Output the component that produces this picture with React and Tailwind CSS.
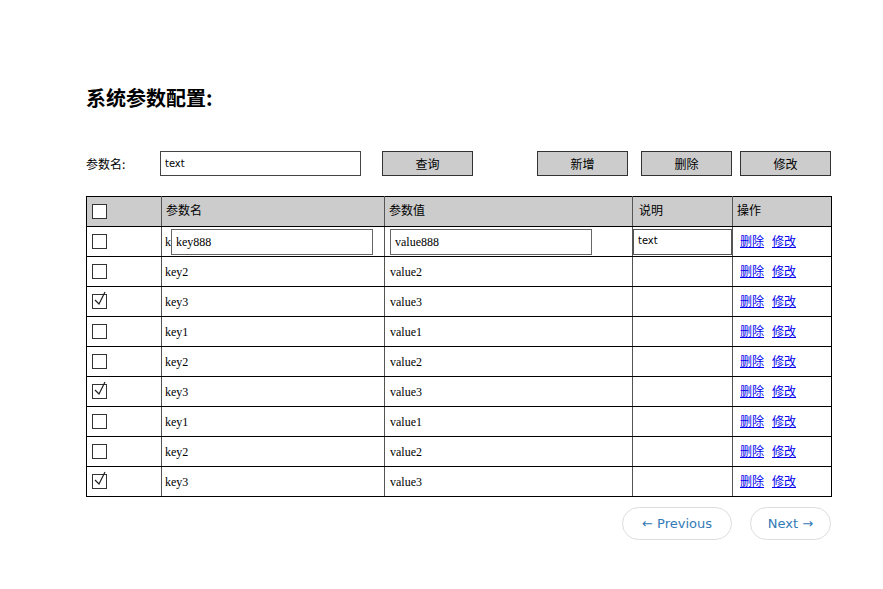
import React from "react";

const ROWS = [
  { key: "key1", value: "value1", checked: false, edit: true },
  { key: "key2", value: "value2", checked: false },
  { key: "key3", value: "value3", checked: true },
  { key: "key1", value: "value1", checked: false },
  { key: "key2", value: "value2", checked: false },
  { key: "key3", value: "value3", checked: true },
  { key: "key1", value: "value1", checked: false },
  { key: "key2", value: "value2", checked: false },
  { key: "key3", value: "value3", checked: true },
];

const cjk = { fontFamily: '"Noto Sans CJK SC", "Liberation Sans", sans-serif' };
const serif = { fontFamily: '"Liberation Serif", "Noto Sans CJK SC", serif' };
const cond = { fontFamily: '"DejaVu Sans Condensed", "DejaVu Sans", sans-serif' };

function Box({ checked }) {
  return (
    <div className="relative w-[15px] h-[15px] border border-[#333] bg-white">
      {checked && (
        <svg className="absolute -top-[4px] left-0" width="16" height="16" viewBox="0 0 16 16">
          <path d="M2 9 L6 13 L12 1" fill="none" stroke="#222" strokeWidth="1.2" />
        </svg>
      )}
    </div>
  );
}

function Btn({ children, className = "" }) {
  return (
    <button className={`h-[25px] bg-[#cccccc] border border-[#333] text-[12px] text-black ${className}`} style={cjk}>
      {children}
    </button>
  );
}

export default function App() {
  return (
    <div className="w-[883px] h-[589px] bg-white overflow-hidden">
      <div className="pl-[86px] pt-[86px]">
        <h1 className="text-[20px] font-bold text-black leading-[24px]" style={cjk}>系统参数配置:</h1>

        {/* search bar */}
        <div className="flex items-center mt-[41px] h-[25px]">
          <span className="w-[74px] text-[12px] text-black" style={cjk}>参数名:</span>
          <div className="w-[201px] h-[25px] border border-[#444] px-[4px] pt-[1px] flex items-center text-[11px] text-black" style={cond}>
            text
          </div>
          <Btn className="ml-[21px] w-[91px]">查询</Btn>
          <Btn className="ml-[64px] w-[91px]">新增</Btn>
          <Btn className="ml-[13px] w-[91px]">删除</Btn>
          <Btn className="ml-[8px] w-[91px]">修改</Btn>
        </div>

        {/* table */}
        <table className="mt-[20px] border-collapse table-fixed w-[745px] text-[12px] text-black">
          <colgroup>
            <col className="w-[75px]" />
            <col className="w-[223px]" />
            <col className="w-[248px]" />
            <col className="w-[100px]" />
            <col className="w-[99px]" />
          </colgroup>
          <thead>
            <tr className="h-[30px] bg-[#cccccc]" style={cjk}>
              <th className="border border-black border-r-[#555] px-[5px] text-left font-normal"><Box /></th>
              <th className="border border-black border-r-[#555] px-[4px] pb-[3px] text-left font-normal">参数名</th>
              <th className="border border-black border-r-[#555] px-[4px] pb-[3px] text-left font-normal">参数值</th>
              <th className="border border-black border-r-[#555] px-[6px] pb-[3px] text-left font-normal">说明</th>
              <th className="border border-black px-[4px] pb-[3px] text-left font-normal">操作</th>
            </tr>
          </thead>
          <tbody>
            {ROWS.map((r, i) => (
              <tr key={i} className="h-[30px]">
                <td className="border border-black border-r-[#555] px-[5px]"><Box checked={r.checked} /></td>
                <td className="border border-black border-r-[#555] px-[3px]" style={serif}>
                  {r.edit ? (
                    <div className="flex items-center">
                      <span>k</span>
                      <div className="w-[202px] h-[26px] border border-[#666] bg-white px-[4px] flex items-center">
                        key888
                      </div>
                    </div>
                  ) : r.key}
                </td>
                <td className="border border-black border-r-[#555] px-[5px]" style={serif}>
                  {r.edit ? (
                    <div className="w-[202px] h-[26px] border border-[#666] bg-white px-[4px] flex items-center">
                      value888
                    </div>
                  ) : r.value}
                </td>
                <td className="border border-black border-r-[#555]">
                  {r.edit && (
                    <div className="w-[99px] h-[26px] border border-[#555] bg-white px-[4px] flex items-center text-[11px]" style={cond}>
                      text
                    </div>
                  )}
                </td>
                <td className="border border-black px-[7px] pb-[2px]" style={cjk}>
                  <a href="#" className="text-[#0000ee] underline">删除</a>
                  <a href="#" className="ml-[8px] text-[#0000ee] underline">修改</a>
                </td>
              </tr>
            ))}
          </tbody>
        </table>

        {/* pager */}
        <div className="flex justify-end w-[745px] mt-[10px] gap-[18px]">
          <button className="w-[110px] h-[33px] rounded-full border border-[#dddddd] bg-white text-[13px] text-[#337ab7]"
            style={{ fontFamily: '"DejaVu Sans", sans-serif' }}>
            ← Previous
          </button>
          <button className="w-[81px] h-[33px] rounded-full border border-[#dddddd] bg-white text-[13px] text-[#337ab7]"
            style={{ fontFamily: '"DejaVu Sans", sans-serif' }}>
            Next →
          </button>
        </div>
      </div>
    </div>
  );
}
